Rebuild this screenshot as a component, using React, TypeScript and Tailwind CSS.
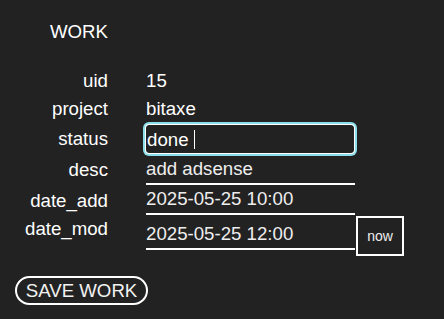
import { useState } from "react";

const font = { fontFamily: '"Liberation Sans", Arial, sans-serif' };

function Label({ children, top = false }: { children: string; top?: boolean }) {
  return (
    <div
      className={`w-[93px] text-right leading-[21px] ${top ? "self-start pt-[3px]" : ""}`}
    >
      {children}
    </div>
  );
}

export default function App() {
  const [desc, setDesc] = useState("add adsense");
  const [dateAdd, setDateAdd] = useState("2025-05-25 10:00");
  const [dateMod, setDateMod] = useState("2025-05-25 12:00");

  const stamp = () => {
    const d = new Date();
    const p = (n: number) => String(n).padStart(2, "0");
    setDateMod(
      `${d.getFullYear()}-${p(d.getMonth() + 1)}-${p(d.getDate())} ${p(d.getHours())}:${p(d.getMinutes())}`
    );
  };

  return (
    <div
      className="w-[444px] h-[319px] bg-[#222222] text-white text-[18.67px] pl-[15px] pt-[21px] overflow-hidden"
      style={font}
    >
      <div className="w-[93px] text-right leading-[21px]">WORK</div>

      <div className="mt-[24px] flex flex-col">
        {/* uid */}
        <div className="flex items-center h-[28px] gap-[38px]">
          <Label>uid</Label>
          <div className="leading-[21px]">15</div>
        </div>

        {/* project */}
        <div className="flex items-center h-[28px] gap-[38px]">
          <Label>project</Label>
          <div className="leading-[21px]">bitaxe</div>
        </div>

        {/* status - focused field */}
        <div className="flex items-center h-[32px] gap-[38px]">
          <Label>status</Label>
          <div className="w-[208px] h-[28px] mt-[2px] flex items-center rounded-[3px] shadow-[0_0_0_1px_#ffffff,0_0_0_3px_#8adfea] leading-[21px]">
            <span className="pl-[1px]">done</span>
            <span className="ml-[5px] w-px h-[19px] bg-white" />
          </div>
        </div>

        {/* desc */}
        <div className="flex items-center h-[31px] gap-[38px]">
          <Label>desc</Label>
          <input
            value={desc}
            onChange={(e) => setDesc(e.target.value)}
            className="w-[209px] h-[31px] bg-transparent border-b-2 border-white text-[#eeeeee] leading-[21px] outline-none p-0"
          />
        </div>

        {/* date_add */}
        <div className="flex items-center h-[30px] gap-[38px]">
          <Label>date_add</Label>
          <input
            value={dateAdd}
            onChange={(e) => setDateAdd(e.target.value)}
            className="w-[209px] h-[30px] bg-transparent border-b-2 border-white text-[#eeeeee] leading-[21px] outline-none p-0"
          />
        </div>

        {/* date_mod */}
        <div className="flex items-start h-[41px] gap-[38px]">
          <Label top>date_mod</Label>
          <div className="flex items-start">
            <input
              value={dateMod}
              onChange={(e) => setDateMod(e.target.value)}
              className="w-[209px] h-[30px] mt-[5px] bg-transparent border-b-2 border-white text-[#eeeeee] leading-[21px] outline-none p-0"
            />
            <button
              onClick={stamp}
              className="w-[48px] h-[40px] mt-[1px] ml-[1px] border-2 border-white text-[14px] text-[#eeeeee] flex items-center justify-center"
            >
              now
            </button>
          </div>
        </div>
      </div>

      <button className="mt-[20px] w-[133px] h-[29px] rounded-full border-2 border-white flex items-center justify-center leading-[21px] text-[#f2f2f2]">
        SAVE WORK
      </button>
    </div>
  );
}
